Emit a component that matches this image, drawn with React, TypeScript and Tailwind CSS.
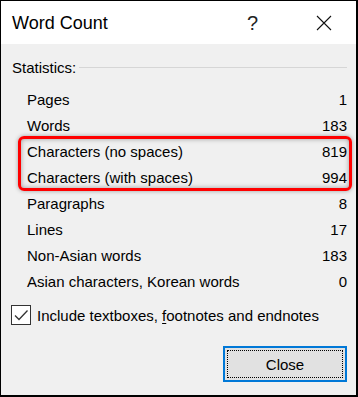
export default function App() {
  return (
    <div
      className="w-[358px] h-[397px] flex flex-col bg-[#f0f0f0] border-black border-l border-t border-r-2 border-b-2 text-black"
      style={{ fontFamily: '"Liberation Sans", Arial, sans-serif' }}
    >
      {/* TITLE BAR */}
      <div className="h-[43px] bg-white flex items-center pl-[11px] shrink-0">
        <span className="text-[18px] leading-none">Word Count</span>
        <span className="ml-auto text-[20px] font-light leading-none text-[#222] mr-[58px]">?</span>
        <svg width="16" height="16" viewBox="0 0 16 16" className="mr-[24px]">
          <path d="M1 1 L15 15 M15 1 L1 15" stroke="#111" strokeWidth="1.1" fill="none" />
        </svg>
      </div>

      {/* STATISTICS HEADER */}
      <div className="flex items-center pl-[11px] pr-[9px] mt-[13px] h-[20px]">
        <span className="text-[15px] leading-none">Statistics:</span>
        <div className="flex-1 h-px bg-[#d6d6d6] ml-[3px]" />
      </div>

      {/* ROWS */}
      <div className="flex flex-col pl-[26px] pr-[9px] mt-[9px]">
        <Row label="Pages" value="1" />
        <Row label="Words" value="183" />
        <div className="relative">
          <div className="absolute -left-[9px] -right-[5px] -top-[2px] -bottom-[1px] border-[3px] border-[#ff0000] rounded-[6px] shadow-[0_0_4px_rgba(0,0,0,0.35),inset_0_0_5px_rgba(0,0,0,0.35)]" />
          <Row label="Characters (no spaces)" value="819" />
          <Row label="Characters (with spaces)" value="994" />
        </div>
        <Row label="Paragraphs" value="8" />
        <Row label="Lines" value="17" />
        <Row label="Non-Asian words" value="183" />
        <Row label="Asian characters, Korean words" value="0" />
      </div>

      {/* CHECKBOX */}
      <div className="flex items-center pl-[10px] mt-[11px]">
        <div className="w-[20px] h-[20px] border border-[#333] bg-white flex items-center justify-center">
          <svg width="16" height="16" viewBox="0 0 16 16">
            <path d="M2 8.5 L6 12.5 L14.5 3.5" stroke="#333" strokeWidth="1.3" fill="none" />
          </svg>
        </div>
        <span className="ml-[6px] text-[15px] leading-none">
          Include textboxes, <span className="underline underline-offset-2">f</span>ootnotes and endnotes
        </span>
      </div>

      {/* BUTTON */}
      <div className="flex justify-end pr-[9px] mt-[21px]">
        <button className="w-[124px] h-[36px] border-2 border-[#0078d7] bg-[#e1e1e1] p-[2px]">
          <div className="w-full h-full border border-dotted border-black flex items-center justify-center text-[15px] leading-none">
            Close
          </div>
        </button>
      </div>
    </div>
  )
}

function Row({ label, value }: { label: string; value: string }) {
  return (
    <div className="relative flex items-center justify-between h-[26px] text-[15px] leading-none">
      <span>{label}</span>
      <span>{value}</span>
    </div>
  )
}
